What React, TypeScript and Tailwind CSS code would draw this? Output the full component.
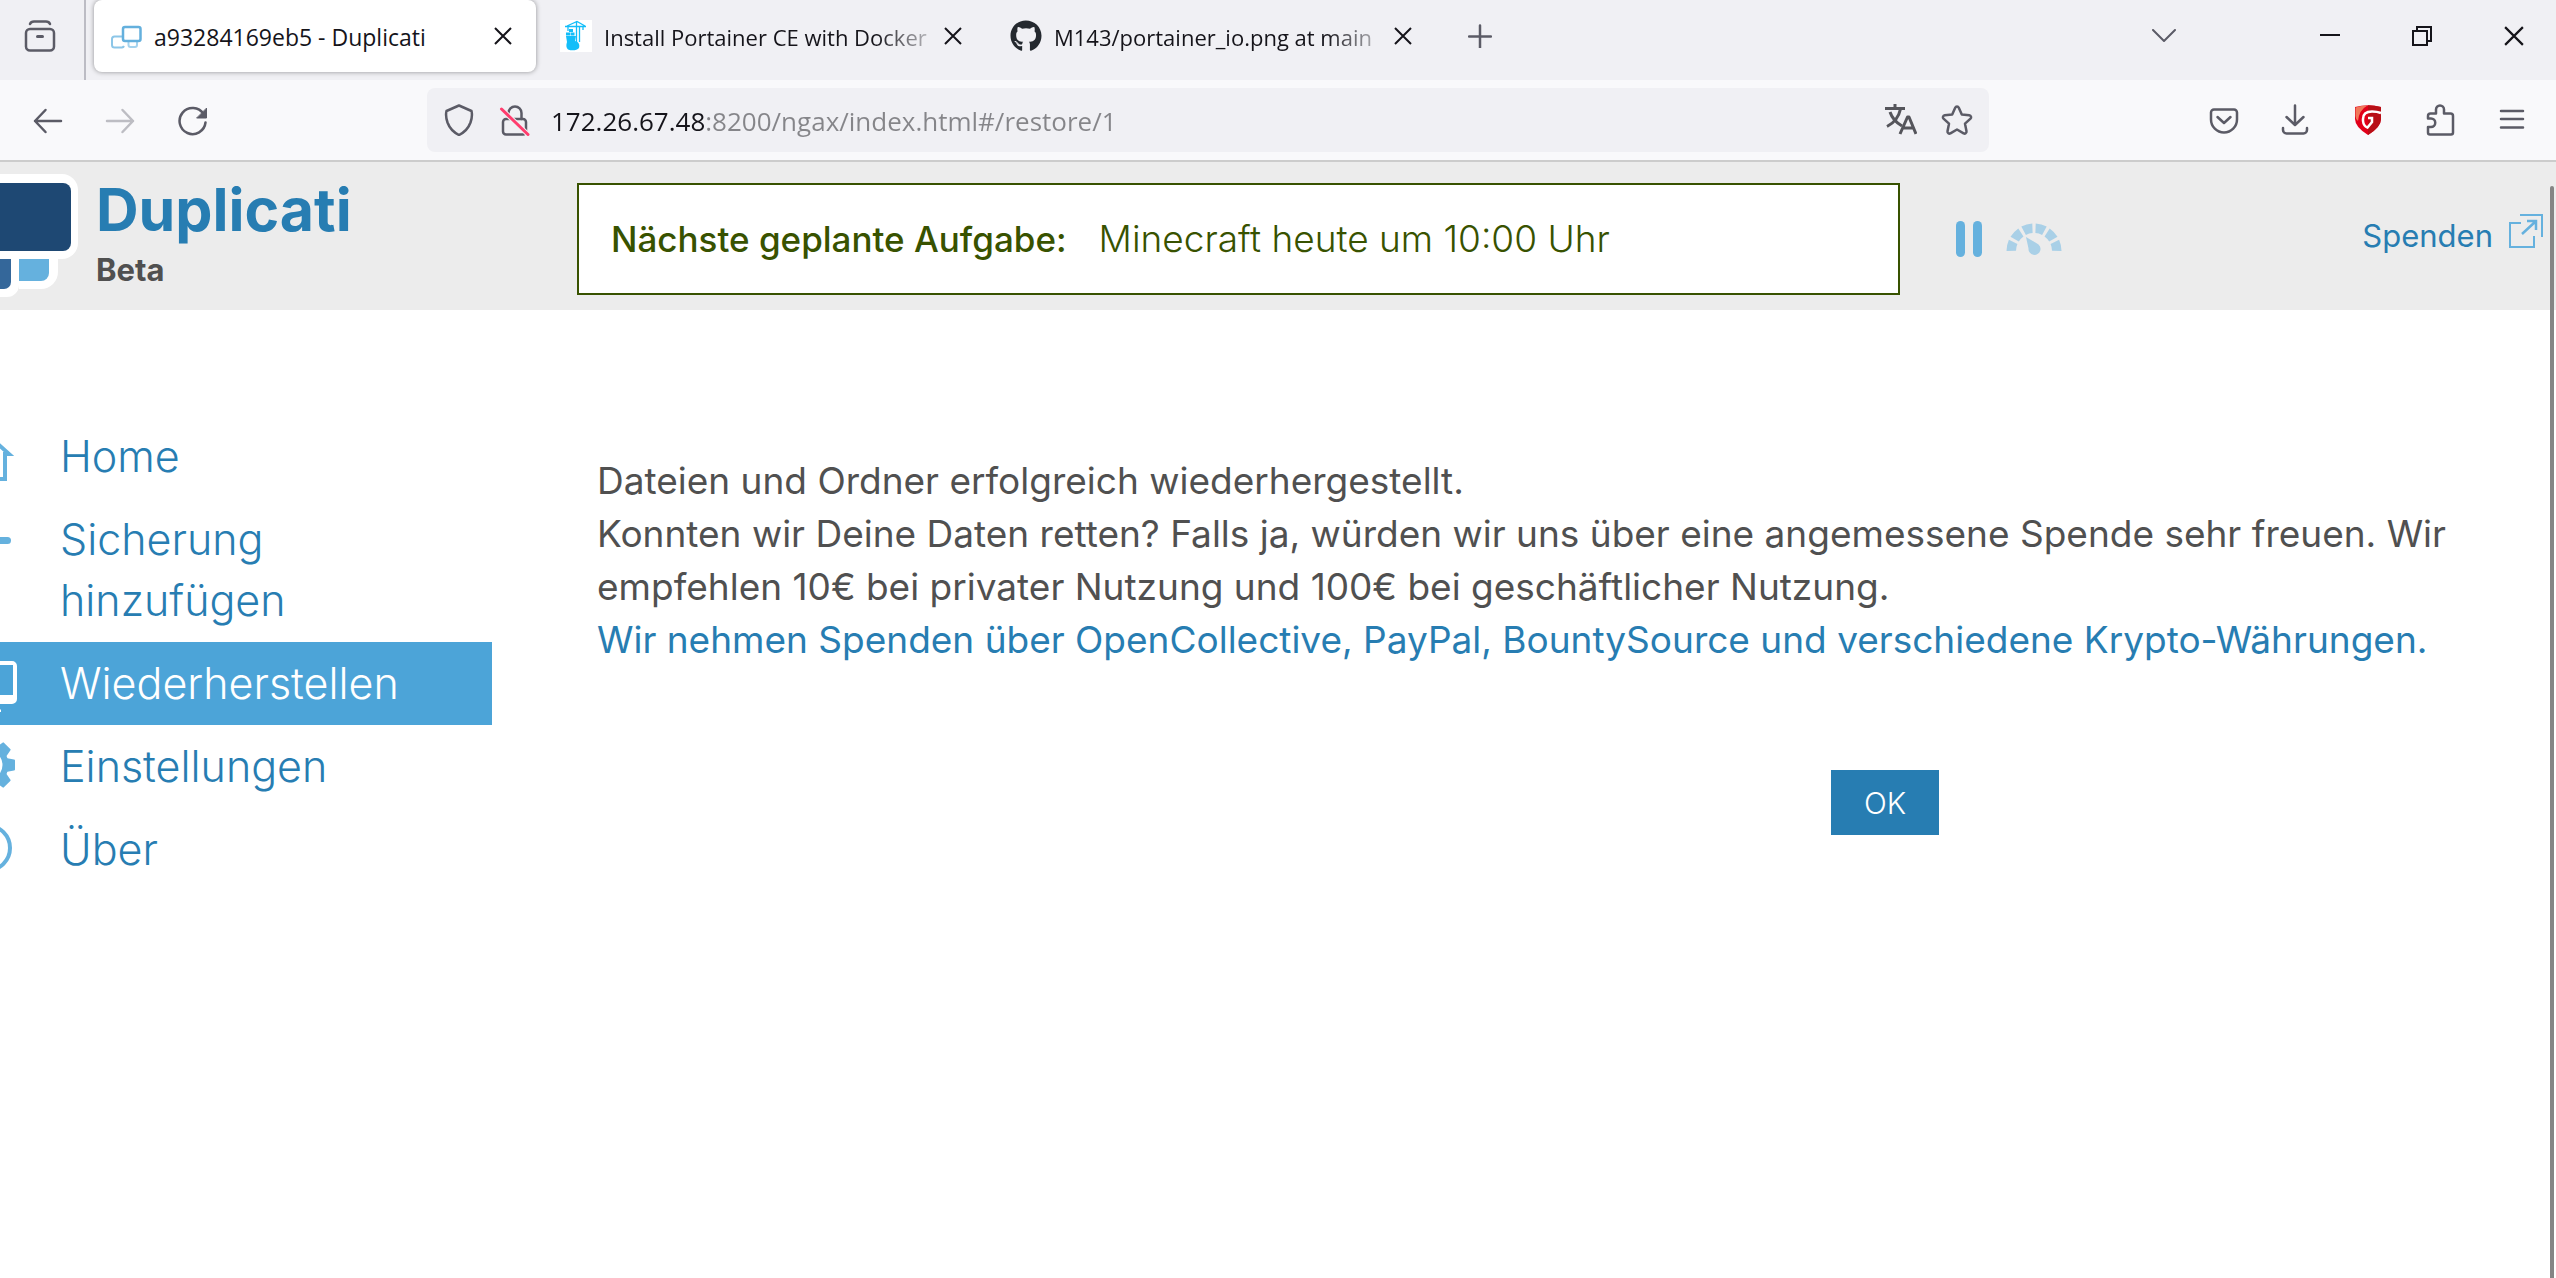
import React from "react";
import { FaGithub } from "react-icons/fa";

type IconProps = { className?: string };

const stroke = {
  fill: "none",
  stroke: "currentColor",
  strokeWidth: 2.5,
  strokeLinecap: "round" as const,
  strokeLinejoin: "round" as const,
};

function Glyph({ children, className = "size-8" }: { children: React.ReactNode; className?: string }) {
  return (
    <svg viewBox="0 0 32 32" className={className + " shrink-0"} aria-hidden="true" {...stroke}>
      {children}
    </svg>
  );
}

function CloseIcon({ className = "w-[18px] h-[18px]" }: IconProps) {
  return (
    <svg viewBox="0 0 18 18" className={className} fill="none" stroke="currentColor" strokeWidth="2" aria-hidden="true">
      <path d="M1 1l16 16M17 1L1 17" />
    </svg>
  );
}

function DuplicatiFavicon() {
  return (
    <svg viewBox="0 0 32 32" className="size-8 shrink-0" fill="none" aria-hidden="true">
      <path d="M12 16.500H4.500A2.500 2.500 0 002 19v6a2.500 2.500 0 002.500 2.500H12a2.500 2.500 0 002-1.500" stroke="#8cc6e8" strokeWidth="2" />
      <path d="M18.500 22v3a2 2 0 002 2H25a2 2 0 002-2v-3" stroke="#a5d3ee" strokeWidth="2" />
      <rect x="13" y="7" width="17.500" height="14" rx="2" stroke="#64b0dd" strokeWidth="2.500" />
    </svg>
  );
}

function PortainerFavicon() {
  return (
    <svg viewBox="0 0 32 32" className="size-8 shrink-0" aria-hidden="true">
      <rect width="32" height="32" fill="#fff" />
      <g fill="none" stroke="#13bef9" strokeWidth="1.300">
        <path d="M5 6.500h21M7 6l10-4.500L25 6M16.500 1v28M19.500 7v15M8 7v4M23 7v3" />
      </g>
      <g fill="#13bef9">
        <rect x="9" y="9" width="4" height="3" />
        <rect x="6" y="12.500" width="4" height="3" />
        <rect x="10.500" y="12.500" width="4" height="3" />
        <path d="M6 16h10l-1 5c4 1 5 4 4 7-2 2.500-7 3-11 1.500C6 28 6 25 7 22z" />
      </g>
    </svg>
  );
}

const tabs = [
  { title: "a93284169eb5 - Duplicati", icon: <DuplicatiFavicon />, active: true },
  { title: "Install Portainer CE with Docker", icon: <PortainerFavicon />, active: false },
  { title: "M143/portainer_io.png at main", icon: <FaGithub className="size-8 shrink-0 text-[#24292f]" />, active: false },
];

function TabStrip() {
  return (
    <div className="flex h-20 items-start bg-[#f0f0f4] text-[#15141a]">
      <button aria-label="Ansicht" className="flex h-20 w-[86px] shrink-0 items-center border-r-2 border-[#bcbcc4] pb-2 pl-6 text-[#5b5b66]">
        <Glyph>
          <path d="M6 4q1-2.500 4-2.500h12q3 0 4 2.500" />
          <rect x="2" y="9" width="28" height="21.500" rx="4" />
          <path d="M13.500 16.500h5" strokeWidth="3" />
        </Glyph>
      </button>
      <div className="flex gap-2 pl-2">
        {tabs.map((t) => (
          <div
            key={t.title}
            className={
              t.active
                ? "flex h-[72px] w-[442px] items-center gap-3 rounded-lg bg-white pr-6 pl-4 shadow-[0_0_5px_rgba(0,0,0,0.4)]"
                : "flex h-[72px] w-[442px] items-center gap-3 pr-6 pl-4"
            }
          >
            {t.icon}
            <a
              href="#"
              className={
                t.active
                  ? "flex-1 pt-0.5 text-[23px] whitespace-nowrap"
                  : "flex-1 pt-0.5 text-[22px] whitespace-nowrap [mask-image:linear-gradient(to_left,rgba(0,0,0,0.2),#000_56px)]"
              }
            >
              {t.title}
            </a>
            <button aria-label="Tab schließen">
              <CloseIcon />
            </button>
          </div>
        ))}
      </div>
      <button aria-label="Neuer Tab" className="ml-8 flex h-[72px] items-center text-[#5b5b66]">
        <svg viewBox="0 0 24 24" className="size-6" {...stroke} aria-hidden="true">
          <path d="M1 12.500h22M12 1.500v22" />
        </svg>
      </button>
      <button aria-label="Tabs auflisten" className="mr-28 ml-auto flex h-[72px] items-center text-[#5b5b66]">
        <svg viewBox="0 0 24 14" className="h-[14px] w-6" {...stroke} strokeWidth={2} aria-hidden="true">
          <path d="M1 1l11 11L23 1" />
        </svg>
      </button>
      <div className="flex gap-2">
        <button aria-label="Minimieren" className="flex h-[72px] w-[84px] items-center justify-center">
          <svg viewBox="0 0 20 20" className="size-5" stroke="currentColor" strokeWidth="2" aria-hidden="true">
            <path d="M0 9h20" />
          </svg>
        </button>
        <button aria-label="Wiederherstellen" className="flex h-[72px] w-[84px] items-center justify-center">
          <svg viewBox="0 0 20 20" className="size-5" fill="none" stroke="currentColor" strokeWidth="2" aria-hidden="true">
            <path d="M1 5h14v14H1zM5 5V1h14v14h-4" />
          </svg>
        </button>
        <button aria-label="Schließen" className="flex h-[72px] w-[84px] items-center justify-center">
          <CloseIcon className="size-5" />
        </button>
      </div>
    </div>
  );
}

function NavBar() {
  return (
    <div className="flex h-[82px] items-center border-b-2 border-[#cccccc] bg-[#f9f9fb] pr-7 pl-8 text-[#5b5b66]">
      <div className="flex gap-10">
        <button aria-label="Zurück">
          <Glyph>
            <path d="M29 17H3M13.500 6L3 17l10.500 11" />
          </Glyph>
        </button>
        <button aria-label="Vor" className="text-[#bdbdc3]">
          <Glyph>
            <path d="M3 17h26M18.500 6L29 17 18.500 28" />
          </Glyph>
        </button>
        <button aria-label="Neu laden">
          <Glyph>
            <path d="M29.500 18.500A13 13 0 1127.500 10" />
            <path d="M30.500 4.500V14H21z" fill="currentColor" strokeWidth="1" />
          </Glyph>
        </button>
      </div>
      <div className="mr-[219px] ml-[219px] flex h-16 flex-1 items-center rounded-lg bg-[#f0f0f4] px-4">
        <button aria-label="Schutz">
          <Glyph>
            <path d="M16 1.500l12.500 5.500c.8 3 .5 7-1 11.500-2 5.500-5.500 9.500-11.500 12.500-6-3-9.500-7-11.500-12.500-1.500-4.500-1.800-8.500-1-11.500z" />
          </Glyph>
        </button>
        <button aria-label="Verbindung nicht sicher" className="ml-6">
          <Glyph>
            <path d="M9.500 14.500V9a6.500 6.500 0 0113 0v6" />
            <rect x="4" y="15" width="23" height="15.500" rx="3" />
            <path d="M2.500 5L29 30.500" stroke="#f0f0f4" strokeWidth="5" />
            <path d="M2.500 5L29 30.500" stroke="#ff3d6e" strokeWidth="3" />
          </Glyph>
        </button>
        <input
          aria-label="Adresse"
          type="text"
          defaultValue="172.26.67.48:8200/ngax/index.html#/restore/1"
          className="ml-5 h-12 min-w-0 flex-1 bg-[linear-gradient(to_right,#15141a_154px,#858589_154px)] bg-clip-text pt-0.5 text-[26px] text-transparent outline-none"
        />
        <button aria-label="Übersetzen" className="ml-5 text-[#55555b]">
          <Glyph>
            <g strokeWidth="3" strokeLinecap="butt">
              <path d="M0 4.500h20M10 0v4.500M15.500 5C14 12 9 19 2 22.500M5 8c2 6 6 10.500 12 14" />
              <path d="M15 30l7.500-17h1.500L31 30M17.500 24h11" />
            </g>
          </Glyph>
        </button>
        <button aria-label="Lesezeichen" className="ml-6">
          <Glyph>
            <path d="M16 2.500c.8 0 1.500.5 1.800 1.200l3 6.800 7.500.8c1.700.2 2.400 2.200 1.200 3.400l-5.500 5 1.500 7.600c.3 1.700-1.500 2.900-2.900 2L16 25.500l-6.600 3.800c-1.400.9-3.200-.3-2.900-2L8 19.700l-5.500-5c-1.200-1.200-.5-3.200 1.200-3.400l7.500-.8 3-6.800c.3-.7 1-1.200 1.800-1.200z" />
          </Glyph>
        </button>
      </div>
      <div className="flex gap-10">
        <button aria-label="Pocket">
          <Glyph>
            <path d="M6 5.500h20a3 3 0 013 3v7a13 13 0 01-26 0v-7a3 3 0 013-3z" />
            <path d="M9.500 13l6.500 6 6.500-6" />
          </Glyph>
        </button>
        <button aria-label="Downloads">
          <Glyph>
            <path d="M15 1.500v19M6.500 13l8.500 8 8.500-8M3 24v2a3.500 3.500 0 003.500 3.500h17A3.500 3.500 0 0027 26v-2" />
          </Glyph>
        </button>
        <button aria-label="G DATA WebProtection">
          <Glyph>
            <g stroke="none">
              <path d="M3 3q13-3.500 26 0v12q0 8-13 16Q3 23 3 15z" fill="#e2001a" />
              <path d="M16 1.300q7 0 13 1.700v12q0 8-13 16z" fill="#b80f16" />
              <path d="M3.500 3.500q6-2 12-2Q7 6 6 17q-2.500-2-2.500-5z" fill="#f0785a" />
            </g>
            <path
              d="M29 9q-4-1.500-9-1.500-9 0-9 7.500v2q.5 5 4.500 6.500L20 18v-4h-4"
              stroke="#fff"
              strokeWidth="2.500"
              strokeLinecap="butt"
              strokeLinejoin="miter"
            />
          </Glyph>
        </button>
        <button aria-label="Erweiterungen">
          <Glyph>
            <path d="M6.500 9.500H12V5.500a4 4 0 018 0v4h6.500a2.500 2.500 0 012.500 2.500v16.500a2 2 0 01-2 2H6a2 2 0 01-2-2V23h3a4 4 0 000-8.500H4V12a2.500 2.500 0 012.500-2.500z" />
          </Glyph>
        </button>
        <button aria-label="Menü">
          <Glyph>
            <path d="M5 7h22M5 15h22M5 23.500h22" />
          </Glyph>
        </button>
      </div>
    </div>
  );
}

function Logo() {
  return (
    <svg viewBox="0 0 80 148" className="h-[148px] w-20 shrink-0" aria-hidden="true">
      <path d="M-10 90H58v20a17 17 0 01-17 17H19v-4a12 12 0 01-12 12H-10z" fill="#fff" />
      <path d="M-10 12H62a16 16 0 0116 16v53a16 16 0 01-16 16H-10z" fill="#fff" />
      <path d="M-10 21H63a8 8 0 018 8v52a8 8 0 01-8 8H-10z" fill="#1e4873" />
      <path d="M-10 97H11v23a7 7 0 01-7 7H-10z" fill="#34679a" />
      <path d="M19 97h30v14a8 8 0 01-8 8H19z" fill="#65b1de" />
    </svg>
  );
}

const gaugeSegments = [0, 1, 2, 3, 4, 5].map((i) => {
  const point = (deg: number, r: number) => {
    const a = (deg * Math.PI) / 180;
    return `${(28 - r * Math.cos(a)).toFixed(1)} ${(28 - r * Math.sin(a)).toFixed(1)}`;
  };
  const from = i * 31.2;
  const to = from + 24;
  return `M${point(from, 27.5)}A27.5 27.5 0 01${point(to, 27.5)}L${point(to - 1, 18)}A18 18 0 00${point(from + 1, 18)}z`;
});

function AppHeader() {
  return (
    <header className="flex h-[148px] items-start bg-[#ececec]">
      <div className="flex w-[577px] shrink-0">
        <Logo />
        <div className="mt-4 ml-4 font-bold">
          <h1 className="text-[59px] leading-[64px] text-[#277db2]">Duplicati</h1>
          <p className="mt-2 text-[31px] leading-10 text-[#505050]">Beta</p>
        </div>
      </div>
      <div className="mt-[21px] flex h-28 flex-1 items-center gap-8 border-2 border-[#385200] bg-white pl-8 whitespace-nowrap text-[#385200]">
        <span className="text-[35px] font-medium">Nächste geplante Aufgabe:</span>
        <span className="text-[37px] font-light">Minecraft heute um 10:00 Uhr</span>
      </div>
      <div className="mt-[21px] flex h-28 w-[656px] shrink-0 items-center pr-[13px] pl-14">
        <button aria-label="Pause">
          <svg viewBox="0 0 26 36" className="h-9 w-[26px]" fill="#65b1de" aria-hidden="true">
            <rect width="9" height="36" rx="4.500" />
            <rect x="17" width="9" height="36" rx="4.500" />
          </svg>
        </button>
        <button aria-label="Drosselung" className="ml-6">
          <svg viewBox="0 0 56 33" className="h-[33px] w-14" fill="#a9d0e7" aria-hidden="true">
            {gaugeSegments.map((d) => (
              <path key={d} d={d} />
            ))}
            <path d="M20 14L31 20.500a6 6 0 11-8.500 5z" />
          </svg>
        </button>
        <a href="#" className="ml-auto flex h-[50px] gap-4 text-[31px] leading-[44px] text-[#277db2]">
          Spenden
          <svg viewBox="0 0 34 34" className="size-[34px]" fill="none" stroke="#65b1de" strokeWidth="2" aria-hidden="true">
            <path d="M11 1h22v22M12 9H1v24h24V22" />
            <path d="M13 20L26 8M18 7h9v9" strokeWidth="2.500" />
          </svg>
        </a>
      </div>
    </header>
  );
}

const gearTeeth = [0, 45, 90, 135, 180, 225, 270, 315];

const navItems = [
  {
    label: "Home",
    icon: <path d="M-6 14.500L9 28H5v25H-17" fill="none" stroke="#65b1de" strokeWidth="4" />,
  },
  { label: "Sicherung hinzufügen", icon: <rect x="-20" y="28" width="31" height="7" rx="3.500" fill="#65b1de" /> },
  {
    label: "Wiederherstellen",
    active: true,
    icon: (
      <path d="M-20 8H12a5 5 0 015 5v33a5 5 0 01-5 5H-20v-9H13V12H-20zM-10 56.500H1V59H-10z" fill="#fff" />
    ),
  },
  {
    label: "Einstellungen",
    icon: (
      <g fill="#65b1de">
        <circle cx="-12" cy="29" r="17.500" fill="none" stroke="#65b1de" strokeWidth="6" />
        {gearTeeth.map((a) => (
          <path key={a} d="M6 22l8 1.500q1 0 1 1v9q0 1-1 1L6 36z" transform={`rotate(${a} -12 29)`} />
        ))}
      </g>
    ),
  },
  { label: "Über", icon: <circle cx="-12.400" cy="29" r="22.400" fill="none" stroke="#65b1de" strokeWidth="4" /> },
];

function Sidebar() {
  return (
    <nav className="w-[492px] shrink-0 pt-[105px] text-[43px] leading-[61px] font-light">
      {navItems.map((item) => (
        <a
          key={item.label}
          href="#"
          className={
            item.active
              ? "flex gap-10 bg-[#4ca4d8] py-[11px] pr-16 text-white"
              : "flex gap-10 py-[11px] pr-16 text-[#277db2]"
          }
        >
          <svg viewBox="0 0 20 61" className="h-[61px] w-5 shrink-0" aria-hidden="true">
            {item.icon}
          </svg>
          <span>{item.label}</span>
        </a>
      ))}
    </nav>
  );
}

export default function App() {
  return (
    <div className="relative flex min-h-screen flex-col overflow-hidden bg-white font-['Open_Sans',sans-serif]">
      <TabStrip />
      <NavBar />
      <div className="flex flex-1 flex-col font-['Inter',sans-serif]">
        <AppHeader />
        <div className="flex">
          <Sidebar />
          <main className="flex-1 pt-36 pr-[60px] pl-[105px] text-[37px] leading-[53px] text-[#505050]">
            <p>Dateien und Ordner erfolgreich wiederhergestellt.</p>
            <p>
              Konnten wir Deine Daten retten? Falls ja, würden wir uns über eine angemessene Spende sehr freuen. Wir
              empfehlen 10€ bei privater Nutzung und 100€ bei geschäftlicher Nutzung.
            </p>
            <p>
              <a href="#" className="text-[#277db2]">
                Wir nehmen Spenden über OpenCollective, PayPal, BountySource und verschiedene Krypto-Währungen.
              </a>
            </p>
            <div className="mt-[104px] mr-[557px] flex justify-end">
              <button className="h-[65px] w-[108px] bg-[#277db2] text-[30px] leading-10 font-light text-white">OK</button>
            </div>
          </main>
        </div>
      </div>
      <div className="absolute top-[186px] right-[2px] bottom-0 w-1 rounded-t-sm bg-[#858585]" />
    </div>
  );
}
